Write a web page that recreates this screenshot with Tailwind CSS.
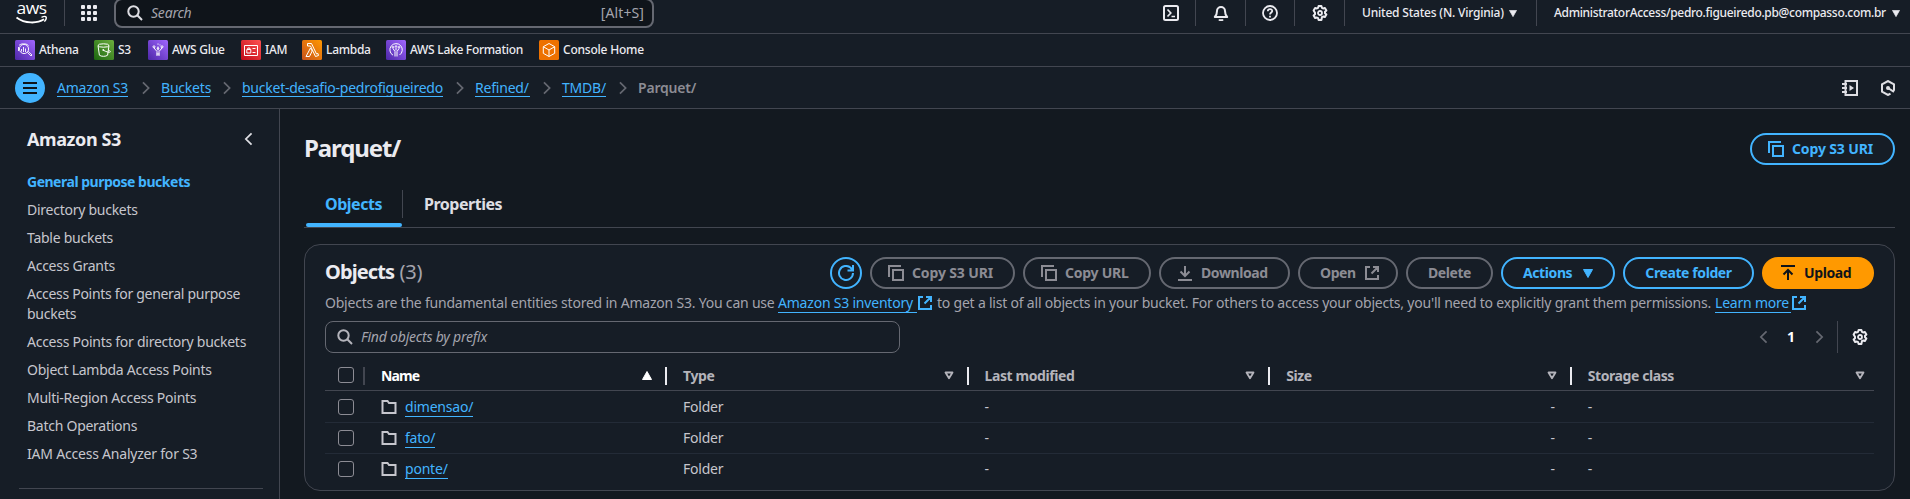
<!DOCTYPE html>
<html lang="en">
<head>
<meta charset="utf-8">
<title>Parquet/ - S3 bucket</title>
<script src="https://cdn.jsdelivr.net/npm/@tailwindcss/browser@4"></script>
</head>
<body class="h-[499px] w-[1910px] overflow-hidden bg-[#131920] font-['Noto_Sans',sans-serif] text-sm leading-5 tracking-[-0.21px] whitespace-nowrap text-[#c6c6cd]">
<svg class="absolute size-0">
  <defs>
    <linearGradient id="purple" x1="0" y1="1" x2="1" y2="0"><stop stop-color="#4d27a8"/><stop offset="1" stop-color="#a166ff"/></linearGradient>
    <linearGradient id="green" x1="0" y1="1" x2="1" y2="0"><stop stop-color="#1b660f"/><stop offset="1" stop-color="#6cae3e"/></linearGradient>
    <linearGradient id="red" x1="0" y1="1" x2="1" y2="0"><stop stop-color="#bd0816"/><stop offset="1" stop-color="#ff5252"/></linearGradient>
    <linearGradient id="orange" x1="0" y1="1" x2="1" y2="0"><stop stop-color="#c8511b"/><stop offset="1" stop-color="#ff9900"/></linearGradient>
    <symbol id="search" viewBox="0 0 16 16"><circle cx="6.5" cy="6.5" r="5.2" fill="none" stroke="currentColor" stroke-width="2"/><path d="M10.3 10.3 15 15" stroke="currentColor" stroke-width="2" fill="none"/></symbol>
    <symbol id="gear" viewBox="0 0 16 16"><path d="M6.6 1h2.8l.5 1.800 1.200.7 1.800-.5 1.500 2.500-1.400 1.300v1.400l1.400 1.300-1.500 2.500-1.800-.5-1.200.7L9.400 15H6.600l-.5-1.800-1.200-.7-1.800.5L1.600 10.500 3 9.200V7.800L1.600 5.500 3.100 3l1.800.5 1.200-.7z" fill="none" stroke="currentColor" stroke-width="2" stroke-linejoin="round"/><circle cx="8" cy="8" r="2" fill="none" stroke="currentColor" stroke-width="1.8"/></symbol>
    <symbol id="copy" viewBox="0 0 16 16"><path d="M1 12V1h12M5 5h10v10H5z" fill="none" stroke="currentColor" stroke-width="2"/></symbol>
    <symbol id="external" viewBox="0 0 16 16"><path d="M6 2H2v12h12v-4M9 2h5v5M14 2 7.500 8.500" fill="none" stroke="currentColor" stroke-width="2"/></symbol>
    <symbol id="chev" viewBox="0 0 10 16"><path d="m1.500 1.500 6.500 6.500-6.500 6.500" fill="none" stroke="currentColor" stroke-width="2"/></symbol>
    <symbol id="folder" viewBox="0 0 16 16"><path d="M1.500 14V2h5l1.500 2h6.500v10z" fill="none" stroke="currentColor" stroke-width="2"/></symbol>
    <symbol id="down" viewBox="0 0 10 9"><path d="M.5.5h9L5 8.500z" fill="currentColor" stroke="currentColor" stroke-linejoin="round"/></symbol>
    <symbol id="sort" viewBox="0 0 10 9"><path d="M1.500 1.500h7L5 7.300z" fill="none" stroke="currentColor" stroke-width="1.800" stroke-linejoin="round"/></symbol>
  </defs>
</svg>

<div class="flex h-full flex-col">
  <header class="flex h-[34px] shrink-0 items-start border-b border-[#424650] bg-[#161d26] text-[#ebebf0]">
    <div class="flex h-[26px] w-[65px] items-center border-r border-[#424650] pl-4">
      <svg class="h-[21px] w-8 overflow-visible" viewBox="0 0 32 21" aria-label="aws">
        <text x="0.500" y="10.800" font-family="Open Sans" font-size="16" font-weight="500" letter-spacing="-0.500" textLength="30" lengthAdjust="spacingAndGlyphs" fill="#fff">aws</text>
        <path d="M.5 14.500C9 20.800 21 20.800 28 16.300" fill="none" stroke="#fff" stroke-width="1.800"/><path d="M25.500 14.300c2-.9 4.200-.8 4.600-.3.400.7-.3 3-1.700 4.600" fill="none" stroke="#fff" stroke-width="1.400"/>
      </svg>
    </div>
    <div class="ml-4 mt-[5px] grid grid-cols-3 gap-[2px]">
      <i class="size-1 rounded-[1px] bg-[#ebebf0]"></i><i class="size-1 rounded-[1px] bg-[#ebebf0]"></i><i class="size-1 rounded-[1px] bg-[#ebebf0]"></i>
      <i class="size-1 rounded-[1px] bg-[#ebebf0]"></i><i class="size-1 rounded-[1px] bg-[#ebebf0]"></i><i class="size-1 rounded-[1px] bg-[#ebebf0]"></i>
      <i class="size-1 rounded-[1px] bg-[#ebebf0]"></i><i class="size-1 rounded-[1px] bg-[#ebebf0]"></i><i class="size-1 rounded-[1px] bg-[#ebebf0]"></i>
    </div>
    <div class="-mt-[2px] ml-[17px] flex h-[30px] w-[540px] items-center rounded-lg border-2 border-[#656871] bg-[#0f141a] pl-[11px] pr-2">
      <svg class="size-4 text-[#dedee3]"><use href="#search"/></svg>
      <span class="ml-2 flex-1 text-[#a4a4ad] italic">Search</span>
      <span class="text-[#a4a4ad] tracking-[0.100px]">[Alt+S]</span>
    </div>
    <div class="ml-auto flex h-[26px] text-xs leading-[26px]">
      <div class="flex w-[50px] items-center justify-center border-r border-[#424650]"><svg class="size-4" viewBox="0 0 16 16" fill="none" stroke="currentColor" stroke-width="2"><rect x="1" y="1" width="14" height="14" rx="1.500"/><path d="m4.500 4.500 3.300 3.500-3.300 3.500M8.500 11.500H12" stroke-width="1.700"/></svg></div>
      <div class="flex w-[50px] items-center justify-center border-r border-[#424650]"><svg class="size-4" viewBox="0 0 16 16" fill="none" stroke="currentColor" stroke-width="2" stroke-linejoin="round"><path d="M4 6a4 4 0 0 1 8 0c0 3 .8 4.500 2.200 6H1.800C3.200 10.500 4 9 4 6z"/><path d="M6 14.500c.8 1 3.200 1 4 0"/></svg></div>
      <div class="flex w-[49px] items-center justify-center border-r border-[#424650]"><svg class="size-4" viewBox="0 0 16 16" fill="none" stroke="currentColor" stroke-width="1.800"><circle cx="8" cy="8" r="7"/><path d="M5.800 6.300c0-3 4.600-2.800 4.400-.2C10.100 7.500 8 7.600 8 9.600M8 10.800v1.700"/></svg></div>
      <div class="flex w-[50px] items-center justify-center border-r border-[#424650]"><svg class="size-4"><use href="#gear"/></svg></div>
      <div class="flex w-[192px] items-center border-r border-[#424650] pl-[17px] font-medium tracking-[-0.200px]">United States (N. Virginia)<svg class="ml-[5px] h-[7px] w-2"><use href="#down"/></svg></div>
      <div class="flex w-[373px] items-center pl-[17px] font-medium tracking-[-0.320px]"><span>AdministratorAccess/pedro.figueiredo.pb@compasso.com.br</span><svg class="ml-[6px] h-[7px] w-2 shrink-0"><use href="#down"/></svg></div>
    </div>
  </header>

  <nav class="flex h-[33px] shrink-0 items-center gap-4 border-b border-[#424650] bg-[#161d26] pl-[15px] text-xs font-medium tracking-[-0.280px] text-[#ebebf0]">
    <a class="flex w-[63px] items-center gap-1"><svg class="size-5 shrink-0" viewBox="0 0 20 20"><rect width="20" height="20" rx="1.500" fill="url(#purple)"/><g fill="none" stroke="#fff" stroke-width=".9"><circle cx="9" cy="9" r="4.600"/><path d="m12.300 12.300 3.700 3.700 1-1-3.800-3.700M6.500 9v2.500M8.500 7v5M10.500 8.500V12M4 5.500c1.500-2 7-2.500 9.500 0M3.500 7v4"/></g></svg>Athena</a>
    <a class="flex w-[38px] items-center gap-1"><svg class="size-5 shrink-0" viewBox="0 0 20 20"><rect width="20" height="20" rx="1.500" fill="url(#green)"/><g fill="none" stroke="#fff" stroke-width="1"><ellipse cx="9.500" cy="5.500" rx="5.500" ry="1.700"/><path d="m4 5.500 1.400 9.700c1.500 1.500 6.700 1.500 8.200 0L15 5.500M9.500 10.300c3 1.700 6.500 2.500 6.800 1.700.2-.7-1-1.700-2-2.200"/></g><circle cx="9.300" cy="10" r=".9" fill="#fff"/></svg>S3</a>
    <a class="flex w-[77px] items-center gap-1"><svg class="size-5 shrink-0" viewBox="0 0 20 20"><rect width="20" height="20" rx="1.500" fill="url(#purple)"/><g fill="none" stroke="#fff" stroke-width="1"><path d="M9 16v-4.500L6 8M11 16v-4.500L14 8M10 10.500V6.500M8.500 14h3"/><circle cx="6" cy="6.800" r="1"/><circle cx="14" cy="6.800" r="1"/><circle cx="10" cy="8.500" r=".8"/><path d="M10 3.500v1.200M12 4.500v1"/></g></svg>AWS Glue</a>
    <a class="flex w-[45px] items-center gap-1"><svg class="size-5 shrink-0" viewBox="0 0 20 20"><rect width="20" height="20" rx="1.500" fill="url(#red)"/><g fill="none" stroke="#fff" stroke-width="1"><path d="M3.500 5.500h13v10h-13zM5.800 9.500h4v3.500h-4zM6.800 9.500V8h2v1.500M11.500 8.500h3M11.500 12.500h3"/></g></svg>IAM</a>
    <a class="flex w-[68px] items-center gap-1"><svg class="size-5 shrink-0" viewBox="0 0 20 20"><rect width="20" height="20" rx="1.500" fill="url(#orange)"/><path d="M4 16.500 8.500 8l1.700 3-2.700 5.500zM5.500 3.500h4l5 10.500 1.500-.5.5 2-3 1-5-10.500h-3z" fill="none" stroke="#fff" stroke-width="1" stroke-linejoin="round"/></svg>Lambda</a>
    <a class="flex w-[137px] items-center gap-1"><svg class="size-5 shrink-0" viewBox="0 0 20 20"><rect width="20" height="20" rx="1.500" fill="url(#purple)"/><g fill="none" stroke="#fff" stroke-width="1"><path d="M7 15.200A6.200 6.200 0 1 1 13.500 15M9 16.500v-5L7 8.500M11 16.500v-5l2-3M10 10.500V8"/><circle cx="7" cy="7.300" r=".8"/><circle cx="10" cy="6.500" r=".8"/><circle cx="13" cy="7.300" r=".8"/></g></svg>AWS Lake Formation</a>
    <a class="flex items-center gap-1 tracking-[-0.220px]"><svg class="size-5 shrink-0" viewBox="0 0 20 20"><rect width="20" height="20" rx="1.500" fill="#ed7100"/><path d="m10 3.500 5.700 3.200v6.600L10 16.500l-5.700-3.200V6.700zM4.300 6.700 10 10l5.700-3.300M10 10v6.500" fill="none" stroke="#fff" stroke-width="1"/></svg>Console Home</a>
  </nav>

  <div class="flex h-[42px] shrink-0 items-center border-b border-[#424650] bg-[#161d26] pl-[15px] pr-[14px] text-[#42b4ff]">
    <button class="mr-3 flex size-[30px] items-center justify-center rounded-full bg-[#42b4ff]"><span class="flex w-[14px] flex-col gap-[3px]"><i class="h-[2px] bg-[#0f141a]"></i><i class="h-[2px] bg-[#0f141a]"></i><i class="h-[2px] bg-[#0f141a]"></i></span></button>
    <a class="h-[19px] w-[71px] border-b border-[#42b4ff] leading-[19px]">Amazon S3</a>
    <svg class="ml-[13px] mr-[10px] h-[14px] w-[10px] text-[#656871]"><use href="#chev"/></svg>
    <a class="h-[19px] w-[49px] border-b border-[#42b4ff] leading-[19px]">Buckets</a>
    <svg class="ml-[12px] mr-[10px] h-[14px] w-[10px] text-[#656871]"><use href="#chev"/></svg>
    <a class="h-[19px] w-[201px] border-b border-[#42b4ff] leading-[19px] tracking-[-0.240px]">bucket-desafio-pedrofigueiredo</a>
    <svg class="ml-[12px] mr-[10px] h-[14px] w-[10px] text-[#656871]"><use href="#chev"/></svg>
    <a class="h-[19px] w-[55px] border-b border-[#42b4ff] leading-[19px]">Refined/</a>
    <svg class="ml-[12px] mr-[10px] h-[14px] w-[10px] text-[#656871]"><use href="#chev"/></svg>
    <a class="h-[19px] w-[44px] border-b border-[#42b4ff] leading-[19px]">TMDB/</a>
    <svg class="ml-[12px] mr-[10px] h-[14px] w-[10px] text-[#656871]"><use href="#chev"/></svg>
    <span class="h-[19px] font-semibold leading-[19px] text-[#8c8c94]">Parquet/</span>
    <div class="ml-auto flex gap-[22px] text-[#dedee3]">
      <svg class="size-4" viewBox="0 0 16 16" fill="none" stroke="currentColor" stroke-width="2"><path d="M3.500 1H15v14H3.500zM0 4h5M0 8h5M0 12h5"/><path d="m7.500 5 4.500 3-4.500 3z" fill="currentColor" stroke="none"/></svg>
      <svg class="size-4" viewBox="0 0 16 16" fill="none" stroke="currentColor" stroke-width="2"><path d="M10.500 13.700 8 15l-6-3.300V4.300L8 1l6 3.300v6.500M8 8l6 3.800"/><circle cx="8" cy="8" r="2" fill="currentColor" stroke="none"/></svg>
    </div>
  </div>

  <div class="flex min-h-0 flex-1">
    <aside class="w-[280px] shrink-0 border-r border-[#424650] bg-[#161d26] px-[27px] pt-[19px]">
      <div class="flex items-center justify-between"><h2 class="text-lg leading-[22px] font-bold tracking-[-0.390px] text-[#ebebf0]">Amazon S3</h2><svg class="mr-[-1px] h-[14px] w-[9px] -scale-x-100 text-[#dedee3]"><use href="#chev"/></svg></div>
      <ul class="mt-[22px] flex flex-col gap-2 tracking-[-0.260px]">
        <li class="font-bold tracking-[-0.490px] text-[#42b4ff]">General purpose buckets</li>
        <li>Directory buckets</li>
        <li>Table buckets</li>
        <li>Access Grants</li>
        <li><span class="tracking-[-0.300px]">Access Points for general purpose</span><br>buckets</li>
        <li>Access Points for directory buckets</li>
        <li>Object Lambda Access Points</li>
        <li>Multi-Region Access Points</li>
        <li>Batch Operations</li>
        <li class="tracking-[-0.210px]">IAM Access Analyzer for S3</li>
      </ul>
      <hr class="mt-6 mr-[-11px] ml-[-8px] border-[#424650]">
    </aside>

    <main class="min-w-0 flex-1 pl-6 pr-[15px] pt-6">
      <div class="flex h-8 items-center justify-between">
        <h1 class="-mt-[2px] text-2xl font-bold tracking-[-1.100px] text-[#ebebf0]">Parquet/</h1>
        <button class="flex h-8 w-[145px] items-center gap-2 rounded-full border-2 border-[#42b4ff] bg-[#161d26] pl-4 font-bold tracking-[-0.140px] text-[#42b4ff]"><svg class="size-4"><use href="#copy"/></svg>Copy S3 URI</button>
      </div>
      <div class="mt-[25px] flex h-[38px] border-b border-[#424650] text-base leading-7 font-bold tracking-[-0.480px]">
        <div class="ml-[2px] flex w-24 flex-col justify-between text-[#42b4ff]"><span class="pl-[19px]">Objects</span><i class="h-1 rounded-sm bg-[#42b4ff]"></i></div>
        <div class="h-7 border-l border-[#424650] pl-[21px] text-[#dedee3]">Properties</div>
      </div>

      <section class="mt-4 h-[247px] rounded-2xl border border-[#424650] bg-[#161d26] px-5 pt-3">
        <div class="flex h-8 items-center gap-2 font-bold tracking-[-0.400px] text-[#8c8c94]">
          <h2 class="-mt-[2px] mr-auto text-xl tracking-[-0.900px] text-[#ebebf0]">Objects <span class="ml-px font-normal text-[#a4a4ad] tracking-[-0.200px]">(3)</span></h2>
          <button class="flex size-8 items-center justify-center rounded-full border-2 border-[#42b4ff] text-[#42b4ff]"><svg class="size-4" viewBox="0 0 16 16" fill="none" stroke="currentColor" stroke-width="2"><path d="M15 8a7 7 0 1 1-2.300-5.200L14.500 5M15 0v5.500H9.500"/></svg></button>
          <button class="flex h-8 w-[145px] items-center gap-2 rounded-full border-2 border-[#656871] pl-4 tracking-[-0.140px]"><svg class="size-4"><use href="#copy"/></svg>Copy S3 URI</button>
          <button class="flex h-8 w-[128px] items-center gap-2 rounded-full border-2 border-[#656871] pl-4 tracking-[-0.250px]"><svg class="size-4"><use href="#copy"/></svg>Copy URL</button>
          <button class="flex h-8 w-[131px] items-center gap-2 rounded-full border-2 border-[#656871] pl-4"><svg class="size-4" viewBox="0 0 16 16" fill="none" stroke="currentColor" stroke-width="2"><path d="M8 1v9.500M3.500 6.500 8 11l4.500-4.500M1 15h14"/></svg>Download</button>
          <button class="flex h-8 w-[100px] items-center gap-2 rounded-full border-2 border-[#656871] pl-5">Open<svg class="size-4"><use href="#external"/></svg></button>
          <button class="flex h-8 w-[87px] items-center justify-center rounded-full border-2 border-[#656871]">Delete</button>
          <button class="flex h-8 w-[114px] items-center gap-[11px] rounded-full border-2 border-[#42b4ff] pl-5 text-[#42b4ff]">Actions<svg class="h-[9px] w-[10px]"><use href="#down"/></svg></button>
          <button class="flex h-8 w-[131px] items-center justify-center rounded-full border-2 border-[#42b4ff] text-[#42b4ff]">Create folder</button>
          <button class="flex h-8 w-[112px] items-center gap-2 rounded-full bg-[#ff9900] pl-[18px] text-[#0f141a]"><svg class="size-4" viewBox="0 0 16 16" fill="none" stroke="currentColor" stroke-width="2"><path d="M8 15V5.500M3.500 9.500 8 5l4.500 4.500M1 1h14"/></svg>Upload</button>
        </div>
        <div class="mt-1 flex h-5 items-center text-[#a4a4ad]">
          <span class="w-[453px]">Objects are the fundamental entities stored in Amazon S3. You can use</span>
          <a class="mt-[1px] h-[19px] w-[139px] border-b border-[#42b4ff] leading-[18px] text-[#42b4ff]">Amazon S3 inventory</a><svg class="size-4 text-[#42b4ff]"><use href="#external"/></svg>
          <span class="ml-1 w-[778px]">to get a list of all objects in your bucket. For others to access your objects, you'll need to explicitly grant them permissions.</span>
          <a class="mt-[1px] h-[19px] w-[76px] border-b border-[#42b4ff] leading-[18px] text-[#42b4ff]">Learn more</a><svg class="size-4 text-[#42b4ff]"><use href="#external"/></svg>
        </div>
        <div class="mt-2 flex h-8 items-center">
          <div class="flex h-8 w-[575px] items-center gap-2 rounded-lg border border-[#656871] pl-[11px]"><svg class="size-4 text-[#b4b4bb]"><use href="#search"/></svg><span class="text-[#a4a4ad] italic">Find objects by prefix</span></div>
          <svg class="ml-auto h-[14px] w-[9px] -scale-x-100 text-[#656871]"><use href="#chev"/></svg>
          <span class="ml-[19px] w-[28px] font-bold text-white">1</span>
          <svg class="h-[14px] w-[9px] text-[#656871]"><use href="#chev"/></svg>
          <i class="ml-[13px] h-8 w-px bg-[#424650]"></i>
          <svg class="ml-[14px] mr-[6px] size-4 text-[#ebebf0]"><use href="#gear"/></svg>
        </div>

        <div class="mt-[5px]">
          <div class="grid h-[33px] w-[1549px] grid-cols-[40px_302px_repeat(4,301.6px)] items-center border-b border-[#424650] pt-[3px] font-bold tracking-[-0.420px] text-[#b4b4bb]">
            <div class="flex items-center justify-between pl-[13px]"><i class="mt-[-2px] size-4 rounded-[3px] border border-[#8c8c94]"></i><i class="h-[18px] w-[2px] bg-[#424650]"></i></div>
            <div class="flex h-5 items-center pl-4 text-white"><span class="flex-1 tracking-[-0.900px]">Name</span><svg class="mr-[13px] h-[9px] w-[10px] -scale-y-100"><use href="#down"/></svg><i class="h-[18px] w-[2px] bg-[#ebebf0]"></i></div>
            <div class="flex h-5 items-center pl-4"><span class="flex-1">Type</span><svg class="mr-[13px] h-[9px] w-[10px]"><use href="#sort"/></svg><i class="h-[18px] w-[2px] bg-[#ebebf0]"></i></div>
            <div class="flex h-5 items-center pl-4"><span class="flex-1">Last modified</span><svg class="mr-[13px] h-[9px] w-[10px]"><use href="#sort"/></svg><i class="h-[18px] w-[2px] bg-[#ebebf0]"></i></div>
            <div class="flex h-5 items-center pl-4"><span class="flex-1">Size</span><svg class="mr-[13px] h-[9px] w-[10px]"><use href="#sort"/></svg><i class="h-[18px] w-[2px] bg-[#ebebf0]"></i></div>
            <div class="flex h-5 items-center pl-4"><span class="flex-1">Storage class</span><svg class="mr-[8px] h-[9px] w-[10px]"><use href="#sort"/></svg></div>
          </div>
          <div class="grid h-8 w-[1549px] grid-cols-[40px_302px_repeat(4,301.6px)] items-center border-b border-[#232b37] pt-px">
            <i class="ml-[13px] size-4 rounded-[3px] border border-[#8c8c94]"></i>
            <div class="flex items-center gap-2 pl-4"><svg class="size-4"><use href="#folder"/></svg><a class="h-[19px] border-b border-[#42b4ff] leading-[18px] text-[#42b4ff]">dimensao/</a></div>
            <span class="pl-4">Folder</span><span class="pl-4">-</span><span class="pr-[17px] text-right">-</span><span class="pl-4">-</span>
          </div>
          <div class="grid h-[31px] w-[1549px] grid-cols-[40px_302px_repeat(4,301.6px)] items-center border-b border-[#232b37]">
            <i class="ml-[13px] size-4 rounded-[3px] border border-[#8c8c94]"></i>
            <div class="flex items-center gap-2 pl-4"><svg class="size-4"><use href="#folder"/></svg><a class="h-[19px] border-b border-[#42b4ff] leading-[18px] text-[#42b4ff]">fato/</a></div>
            <span class="pl-4">Folder</span><span class="pl-4">-</span><span class="pr-[17px] text-right">-</span><span class="pl-4">-</span>
          </div>
          <div class="grid h-[30px] w-[1549px] grid-cols-[40px_302px_repeat(4,301.6px)] items-center">
            <i class="ml-[13px] size-4 rounded-[3px] border border-[#8c8c94]"></i>
            <div class="flex items-center gap-2 pl-4"><svg class="size-4"><use href="#folder"/></svg><a class="h-[19px] border-b border-[#42b4ff] leading-[18px] text-[#42b4ff]">ponte/</a></div>
            <span class="pl-4">Folder</span><span class="pl-4">-</span><span class="pr-[17px] text-right">-</span><span class="pl-4">-</span>
          </div>
        </div>
      </section>
    </main>
  </div>
</div>
</body>
</html>
